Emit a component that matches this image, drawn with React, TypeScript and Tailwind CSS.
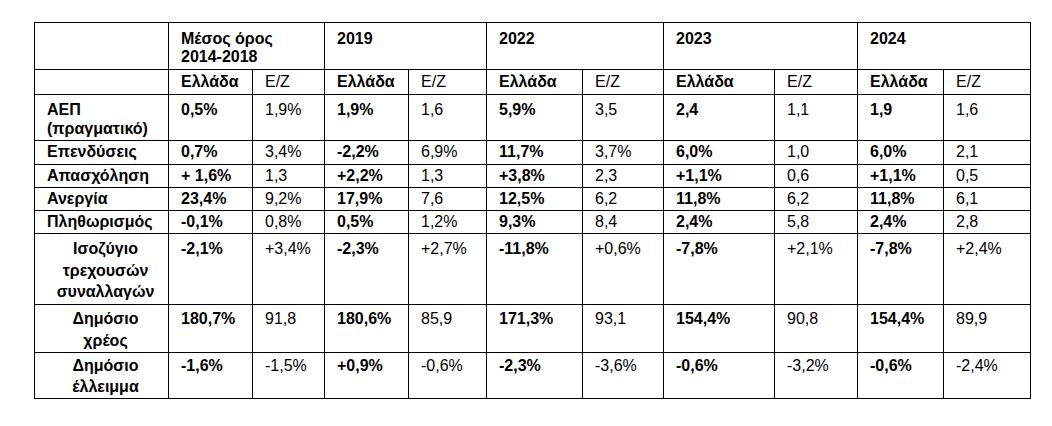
import React from 'react';

type Row = {
  label: string[];
  center?: boolean;
  values: string[];
  h: string;
  pad: string;
  lead: string;
};

const rows: Row[] = [
  {
    label: ['ΑΕΠ', '(πραγματικό)'],
    values: ['0,5%', '1,9%', '1,9%', '1,6', '5,9%', '3,5', '2,4', '1,1', '1,9', '1,6'],
    h: 'h-[46px]',
    pad: 'pt-[5px]',
    lead: 'leading-[19px]',
  },
  {
    label: ['Επενδύσεις'],
    values: ['0,7%', '3,4%', '-2,2%', '6,9%', '11,7%', '3,7%', '6,0%', '1,0', '6,0%', '2,1'],
    h: 'h-[24px]',
    pad: 'pt-[1px]',
    lead: 'leading-[19px]',
  },
  {
    label: ['Απασχόληση'],
    values: ['+ 1,6%', '1,3', '+2,2%', '1,3', '+3,8%', '2,3', '+1,1%', '0,6', '+1,1%', '0,5'],
    h: 'h-[23px]',
    pad: 'pt-[1px]',
    lead: 'leading-[19px]',
  },
  {
    label: ['Ανεργία'],
    values: ['23,4%', '9,2%', '17,9%', '7,6', '12,5%', '6,2', '11,8%', '6,2', '11,8%', '6,1'],
    h: 'h-[23px]',
    pad: 'pt-[1px]',
    lead: 'leading-[19px]',
  },
  {
    label: ['Πληθωρισμός'],
    values: ['-0,1%', '0,8%', '0,5%', '1,2%', '9,3%', '8,4', '2,4%', '5,8', '2,4%', '2,8'],
    h: 'h-[23px]',
    pad: 'pt-[1px]',
    lead: 'leading-[19px]',
  },
  {
    label: ['Ισοζύγιο', 'τρεχουσών', 'συναλλαγών'],
    center: true,
    values: ['-2,1%', '+3,4%', '-2,3%', '+2,7%', '-11,8%', '+0,6%', '-7,8%', '+2,1%', '-7,8%', '+2,4%'],
    h: 'h-[71px]',
    pad: 'pt-[4px]',
    lead: 'leading-[21.5px]',
  },
  {
    label: ['Δημόσιο', 'χρέος'],
    center: true,
    values: ['180,7%', '91,8', '180,6%', '85,9', '171,3%', '93,1', '154,4%', '90,8', '154,4%', '89,9'],
    h: 'h-[48px]',
    pad: 'pt-[3px]',
    lead: 'leading-[22px]',
  },
  {
    label: ['Δημόσιο', 'έλλειμμα'],
    center: true,
    values: ['-1,6%', '-1,5%', '+0,9%', '-0,6%', '-2,3%', '-3,6%', '-0,6%', '-3,2%', '-0,6%', '-2,4%'],
    h: 'h-[46px]',
    pad: 'pt-[2px]',
    lead: 'leading-[21px]',
  },
];

const widths = ['w-[134px]', 'w-[84px]', 'w-[72px]', 'w-[84px]', 'w-[78px]', 'w-[96px]', 'w-[81px]', 'w-[111px]', 'w-[83px]', 'w-[86px]', 'w-[87px]'];

const cell = 'border border-black align-top pl-[12px] pr-1';

export default function App() {
  return (
    <div className="min-h-screen w-[1052px] h-[426px] bg-white pt-[22px] pl-[34px] text-black font-['Liberation_Sans',Arial,sans-serif] text-[16px]">
      <table className="table-fixed border-collapse w-[997px]">
        <colgroup>
          {widths.map((w, i) => (
            <col key={i} className={w} />
          ))}
        </colgroup>
        <tbody>
          <tr className="h-[47px]">
            <td className={cell}></td>
            <td colSpan={2} className={`${cell} pt-[7px] leading-[18px] font-bold`}>
              Μέσος όρος
              <br />
              2014-2018
            </td>
            {['2019', '2022', '2023', '2024'].map((y) => (
              <td key={y} colSpan={2} className={`${cell} pt-[7px] leading-[18px] font-bold`}>
                {y}
              </td>
            ))}
          </tr>
          <tr className="h-[25px]">
            <td className={cell}></td>
            {[0, 1, 2, 3, 4].map((i) => (
              <React.Fragment key={i}>
                <td className={`${cell} pt-[2px] leading-[19px] font-bold`}>Ελλάδα</td>
                <td className={`${cell} pt-[2px] leading-[19px]`}>E/Z</td>
              </React.Fragment>
            ))}
          </tr>
          {rows.map((r) => (
            <tr key={r.label.join(' ')} className={r.h}>
              <td className={`${cell} ${r.pad} ${r.lead} font-bold ${r.center ? 'text-center' : ''}`}>
                {r.label.map((l, i) => (
                  <div key={i}>{l}</div>
                ))}
              </td>
              {r.values.map((v, i) => (
                <td key={i} className={`${cell} ${r.pad} ${r.lead} ${i % 2 === 0 ? 'font-bold' : ''}`}>
                  {v}
                </td>
              ))}
            </tr>
          ))}
        </tbody>
      </table>
    </div>
  );
}
